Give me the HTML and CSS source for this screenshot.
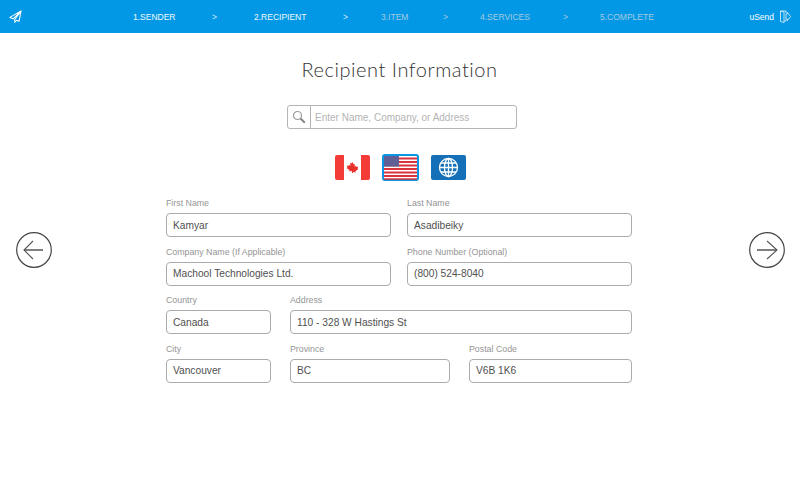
FILE: index.html
```html
<!DOCTYPE html>
<html lang="en">
<head>
<meta charset="utf-8">
<title>Recipient Information</title>
<link rel="stylesheet" href="styles.css">
</head>
<body>
<header class="topbar">
  <svg class="logo" width="13" height="13" viewBox="0 0 14 14"><path d="M13 1 1 8l3.500 1.500L13 1 6 10.500l.3 2.800 1.800-2.300 2.700 1.200Z" fill="none" stroke="#fff" stroke-width="1.100" stroke-linejoin="round"/></svg>
  <nav class="steps">
    <span class="step on s1">1.SENDER</span><span class="sep on first">&gt;</span>
    <span class="step on s2">2.RECIPIENT</span><span class="sep on">&gt;</span>
    <span class="step s3">3.ITEM</span><span class="sep">&gt;</span>
    <span class="step s4">4.SERVICES</span><span class="sep">&gt;</span>
    <span class="step s5">5.COMPLETE</span>
  </nav>
  <div class="brand">
    <span>uSend</span>
    <svg width="11" height="13" viewBox="0 0 11 13"><path d="M6 3V1H.5v10.500L4 12.500V2L.5 1M6 9.500V11H4M6 4h1.300V2.300L10.500 6.500 7.300 10.700V9H6Z" fill="none" stroke="#cfeafa" stroke-width=".9"/></svg>
  </div>
</header>
<main class="stage">
  <button class="nav-btn" type="button" aria-label="Back">
    <svg width="36" height="36" viewBox="0 0 36 36"><circle cx="18" cy="18" r="17.300" fill="#fff" stroke="#444" stroke-width="1.200"/><path d="M27 18H8" fill="none" stroke="#555" stroke-width="1.500"/><path d="M17 9 8 18l9 9" fill="none" stroke="#555" stroke-width="1.100"/></svg>
  </button>
  <section class="content">
    <h1 class="title">Recipient Information</h1>
    <div class="search">
      <span class="search-icon"><svg width="14" height="14" viewBox="0 0 14 14"><circle cx="5.500" cy="5.500" r="4" fill="none" stroke="#999" stroke-width="1.200"/><path d="m8.500 8.500 4.300 4.300" stroke="#888" stroke-width="2"/></svg></span>
      <input class="search-input" type="text" placeholder="Enter Name, Company, or Address">
    </div>
    <div class="flags">
      <svg class="flag" width="35" height="25" viewBox="0 0 35 25"><rect width="35" height="25" rx="2" fill="#f33b37"/><rect x="9" width="17" height="25" fill="#fff"/><path d="m17.500 7 1.200 2.400 1.300-.7-.5 3 1.500-1 .5 1.200 1.700-.3-.6 1.800.8.500-3 2.300.4 1.300-2.800-.4V18h-1v-1.900l-2.800.4.400-1.300-3-2.300.8-.5-.6-1.800 1.700.3.500-1.200 1.500 1-.5-3 1.300.7Z" fill="#e8302c"/></svg>
      <svg class="flag" width="37" height="27" viewBox="0 0 37 27">
        <rect x="1" y="1" width="35" height="25" rx="2" fill="#fff" stroke="#0a96e2" stroke-width="2"/>
        <path d="M2 4.500h33M2 8h33M2 11.500h33M2 15h33M2 18.500h33M2 22h33" stroke="#d8323c" stroke-width="1.800"/>
        <path d="M2 25h33" stroke="#d8323c" stroke-width="1.400"/>
        <rect x="2" y="2" width="15" height="10.500" fill="#5f5f95"/>
      </svg>
      <svg class="flag" width="35" height="25" viewBox="0 0 35 25"><rect width="35" height="25" rx="2" fill="#1570b8"/><g fill="none" stroke="#fff" stroke-width="1.300"><circle cx="17.500" cy="12.500" r="9"/><ellipse cx="17.500" cy="12.500" rx="4" ry="9"/><path d="M17.500 3.500v18M8.500 12.500h18M9.800 8h15.400M9.800 17h15.400"/></g></svg>
    </div>
    <form class="form">
      <div class="row">
        <label class="field w-half"><span class="label">First Name</span><input class="input" value="Kamyar"></label>
        <label class="field w-half"><span class="label">Last Name</span><input class="input" value="Asadibeiky"></label>
      </div>
      <div class="row">
        <label class="field w-half"><span class="label">Company Name (If Applicable)</span><input class="input" value="Machool Technologies Ltd."></label>
        <label class="field w-half"><span class="label">Phone Number (Optional)</span><input class="input" value="(800) 524-8040"></label>
      </div>
      <div class="row wide">
        <label class="field w-small"><span class="label">Country</span><input class="input" value="Canada"></label>
        <label class="field grow"><span class="label">Address</span><input class="input" value="110 - 328 W Hastings St"></label>
      </div>
      <div class="row wide">
        <label class="field w-small"><span class="label">City</span><input class="input" value="Vancouver"></label>
        <label class="field w-mid"><span class="label">Province</span><input class="input" value="BC"></label>
        <label class="field grow"><span class="label">Postal Code</span><input class="input" value="V6B 1K6"></label>
      </div>
    </form>
  </section>
  <button class="nav-btn next" type="button" aria-label="Next">
    <svg width="36" height="36" viewBox="0 0 36 36"><circle cx="18" cy="18" r="17.300" fill="#fff" stroke="#444" stroke-width="1.200"/><path d="M8 18h20" fill="none" stroke="#555" stroke-width="1.500"/><path d="m18 9 10 9-10 9" fill="none" stroke="#555" stroke-width="1.100"/></svg>
  </button>
</main>
</body>
</html>
```
FILE: styles.css
```css
* { box-sizing: border-box; }
html, body { margin: 0; height: 100%; background: #fff; overflow: hidden; }
body { font-family: "Liberation Sans", Arial, sans-serif; color: #444; }

.topbar {
  height: 33px;
  background: #0398e6;
  display: flex;
  align-items: center;
  padding: 0 9px;
  font-size: 8.500px;
  color: #fff;
}
.logo { flex: none; margin-bottom: 1px; }
.steps { display: flex; margin-left: 111px; flex: 1; align-items: center; }
.step { color: #a6c9e0; white-space: nowrap; }
.step.on { color: #eef8fe; }
.sep { width: 37px; color: #a6c9e0; white-space: nowrap; }
.sep.on { width: 38px; color: #cfeafa; }
.sep.first { width: 42px; }
.s1 { width: 79px; }
.s2 { width: 89px; }
.s3 { width: 62px; }
.s4 { width: 83px; }
.brand { display: flex; align-items: center; gap: 6px; color: #fff; }

.stage {
  height: 434px;
  display: flex;
  align-items: center;
  padding-left: 16px;
}
.nav-btn {
  flex: none;
  width: 36px;
  height: 36px;
  padding: 0;
  border: 0;
  background: none;
  display: block;
}
.nav-btn svg { display: block; }
.next { margin-left: 117px; }

.content {
  align-self: flex-start;
  width: 466px;
  margin-left: 114px;
  display: flex;
  flex-direction: column;
  align-items: center;
}
.title {
  margin: 24px 0 0 1px;
  height: 24px;
  line-height: 24px;
  font-family: Lato, sans-serif;
  font-weight: 300;
  font-size: 20px;
  letter-spacing: .55px;
  color: #333;
}
.search {
  margin: 24px 0 0 6px;
  width: 230px;
  height: 24px;
  display: flex;
  border: 1px solid #b5b5b5;
  border-radius: 3px;
}
.search-icon {
  width: 23px;
  flex: none;
  border-right: 1px solid #b5b5b5;
  display: flex;
  align-items: center;
  justify-content: center;
}
.search-input {
  flex: 1;
  min-width: 0;
  border: 0;
  outline: 0;
  background: none;
  padding: 0 4px;
  font: 10px "Liberation Sans", Arial, sans-serif;
}
.search-input::placeholder { color: #b4b4b4; opacity: 1; }

.flags {
  margin: 25px 0 0 3px;
  height: 27px;
  display: flex;
  align-items: center;
  gap: 12px;
}
.flag { display: block; }

.form {
  width: 100%;
  margin-top: 16px;
  display: flex;
  flex-direction: column;
  gap: 8.670px;
}
.row { display: flex; gap: 16px; }
.row.wide { gap: 19px; }
.field { display: flex; flex-direction: column; min-width: 0; }
.w-half { flex: 1 1 0; }
.w-small { width: 105px; flex: none; }
.w-mid { width: 160px; flex: none; }
.grow { flex: 1 1 0; }
.label {
  height: 16px;
  line-height: 13px;
  font-size: 8.800px;
  color: #949494;
}
.input {
  width: 100%;
  height: 24px;
  border: 1px solid #ababab;
  border-radius: 4px;
  padding: 0 6px;
  outline: 0;
  background: #fff;
  font: 10.200px "Liberation Sans", Arial, sans-serif;
  color: #505050;
}
```
